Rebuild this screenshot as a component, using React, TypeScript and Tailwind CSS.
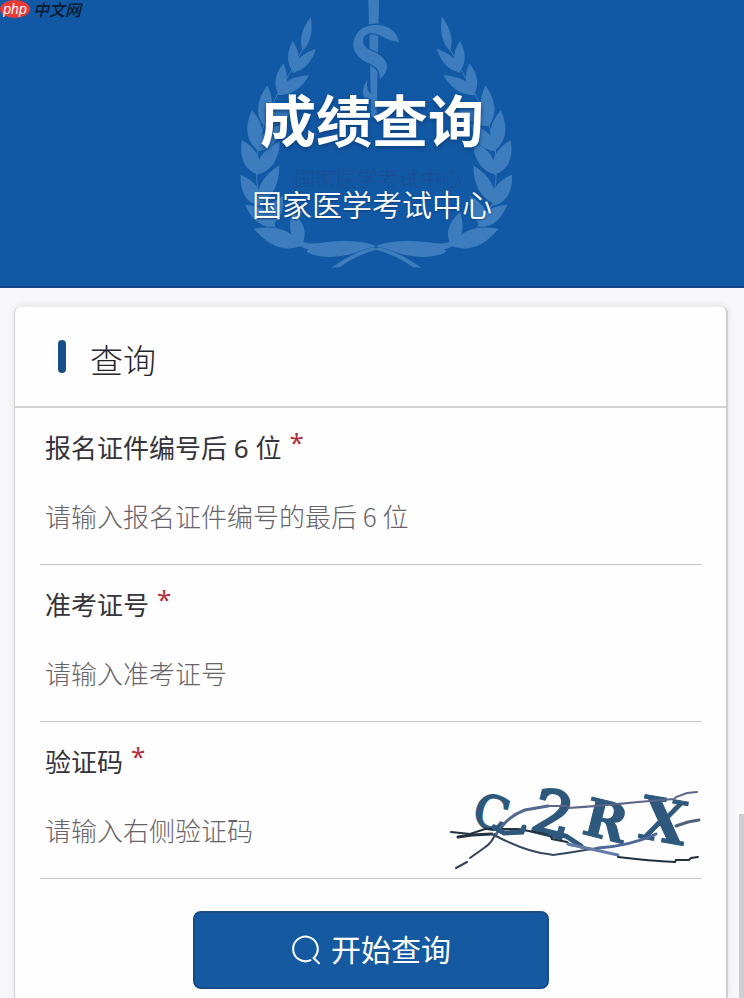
import React from "react";

type Point = [number, number];

// tip, base and half width of every leaf on the left branch
const leaves: [Point, Point, number][] = [
  [[242, 50], [218, 152], 30],
  [[188, 122], [192, 218], 36],
  [[258, 146], [186, 218], 34],
  [[160, 190], [148, 286], 38],
  [[238, 226], [140, 284], 40],
  [[112, 256], [100, 376], 46],
  [[204, 308], [100, 378], 42],
  [[66, 330], [82, 450], 50],
  [[156, 372], [82, 454], 46],
  [[36, 420], [84, 524], 52],
  [[150, 424], [82, 524], 48],
  [[32, 524], [90, 618], 50],
  [[148, 496], [84, 612], 48],
  [[46, 614], [136, 680], 46],
  [[158, 588], [110, 680], 46],
  [[72, 686], [214, 738], 58],
  [[188, 636], [214, 738], 46],
];

const leafPath = ([tip, base, w]: [Point, Point, number]) => {
  const dx = tip[0] - base[0];
  const dy = tip[1] - base[1];
  const len = Math.hypot(dx, dy);
  const nx = (-dy / len) * w * 0.9;
  const ny = (dx / len) * w * 0.9;
  const mx = base[0] + dx * 0.4;
  const my = base[1] + dy * 0.4;
  return `M${base[0]} ${base[1]} Q${mx + nx} ${my + ny} ${tip[0]} ${tip[1]} Q${mx - nx} ${my - ny} ${base[0]} ${base[1]}Z`;
};

const Branch = () => (
  <g>
    {leaves.map((leaf, i) => (
      <path key={i} d={leafPath(leaf)} />
    ))}
    <path
      d="M218 148 Q180 220 142 284 Q96 370 82 450 Q74 540 90 610 Q120 690 212 736"
      fill="none"
      stroke="currentColor"
      strokeWidth="3"
    />
    <path d="M194 716 Q230 738 290 726 Q380 716 440 738 Q404 746 376 758 Q310 780 250 764 Q220 756 236 748 Q204 742 194 716Z" />
    <path d="M430 742 Q370 756 304 803 L330 801 Q384 762 446 748Z" />
  </g>
);

const Emblem = () => (
  <svg
    className="absolute top-0 left-1/2 h-[290px] w-[290px] -translate-x-1/2 text-[#3d7dbd]"
    viewBox="-9 0 870 870"
    fill="currentColor"
    aria-hidden="true"
  >
    <Branch />
    <g transform="translate(878 0) scale(-1 1)">
      <Branch />
    </g>
    <path d="M415 0H447L440 350H424Z" />
    <path
      d="M510 134 C506 124 492 128 474 120 C454 112 440 98 420 102 C392 110 396 138 424 150 C468 168 484 196 466 222 L448 244 C450 214 440 202 412 190 C366 168 358 132 378 102 C396 72 446 64 478 82 C500 94 508 114 510 134Z"
      stroke="#1259a5"
      strokeWidth="4"
    />
    <path d="M412 240 Q392 268 402 292 L432 300 L428 284 Q406 276 412 240Z" />
  </svg>
);

const SiteLogo = () => (
  <div className="absolute top-0 left-0 flex items-center gap-[3px] pr-2 italic">
    <span className="flex h-[18px] w-[30px] items-center justify-center rounded-[50%] bg-[#ea3a36] font-['Liberation_Sans',sans-serif] text-sm leading-none text-white">
      php
    </span>
    <span className="text-base leading-[18px] font-medium text-[#06162c]">中文网</span>
  </div>
);

const Captcha = () => (
  <svg className="h-[90px] w-[252px] overflow-visible" viewBox="0 0 252 90" role="img" aria-label="验证码">
    <g
      className="font-['DejaVu_Serif','Liberation_Serif',serif]"
      fill="#2f587d"
      stroke="#2f587d"
      textAnchor="middle"
    >
      <text x="42" y="43" fontSize="46" strokeWidth="2" transform="rotate(14 42 26)">C</text>
      <text x="103" y="50" fontSize="62" strokeWidth="3" transform="rotate(14 103 28)">2</text>
      <text x="156" y="53" fontSize="52" fontWeight="700" strokeWidth="1" transform="rotate(14 156 34)">R</text>
      <text x="214" y="56" fontSize="60" fontWeight="700" strokeWidth="1" transform="rotate(10 214 34)">X</text>
    </g>
    <g fill="none" strokeWidth="2" strokeLinecap="round" transform="translate(0 -2)">
      <path stroke="#34405a" d="M6 84 L17 78 M20 74 L34 64 Q43 58 45 50" />
      <path stroke="#53698f" strokeWidth="3" d="M45 52 Q56 33 75 26 L98 22" />
      <path stroke="#5d6689" d="M98 22 H116 M118 24 Q150 22 188 18 L224 15 L226 13 L237 9 L247 8" />
      <path stroke="#22333f" d="M1 48 L20 50 L35 45 H68 L100 51 L102 55 L117 58 L120 61 L148 66" />
      <path stroke="#22333f" strokeWidth="3" d="M8 53 L22 51 L42 50" />
      <path stroke="#2f587d" strokeWidth="5" d="M44 43 L54 49 L72 48 L74 43" />
      <path stroke="#2f587d" strokeWidth="5" d="M100 49 L116 52 L131 62" />
      <path stroke="#33485c" d="M42 50 Q76 68 98 70 L103 71 L117 69 L148 64" />
      <path stroke="#637ca8" strokeWidth="3" d="M118 60 L168 71" />
      <path stroke="#4d6796" strokeWidth="3" d="M148 64 Q180 62 206 50" />
      <path stroke="#4f6279" strokeWidth="3" d="M226 42 L238 38 L249 36" />
      <path stroke="#22303a" d="M168 73 Q200 77 225 78 L226 76 L239 76 L241 74 L248 73" />
    </g>
  </svg>
);

interface FieldProps {
  id: string;
  label: string;
  placeholder: string;
  children?: React.ReactNode;
}

const Field = ({ id, label, placeholder, children }: FieldProps) => (
  <div className="relative h-[157px] border-b border-[#c6c2c9] pt-[22px]">
    <label
      htmlFor={id}
      className="flex gap-2 px-[5px] font-['Noto_Sans','Noto_Sans_CJK_SC',sans-serif] text-[26px] leading-9 text-[#35343a]"
    >
      {label}
      <span className="-mt-1.5 text-[#b0303f]">*</span>
    </label>
    <input
      id={id}
      type="text"
      placeholder={placeholder}
      className="mt-[31px] block h-9 w-full bg-transparent px-[5px] text-[26px] font-light text-[#26252b] outline-none placeholder:font-light placeholder:text-[#66646a]"
    />
    {children}
  </div>
);

const App: React.FC = () => {
  return (
    <div className="relative flex min-h-screen flex-col bg-[#f8f7f9] font-['Noto_Sans_CJK_SC',sans-serif]">
      {/* Banner */}
      <header className="relative h-72 overflow-hidden border-b-2 border-[#0d4788] bg-[#1259a5] text-center text-white">
        <Emblem />
        <div className="relative pt-[78px]">
          <h1 className="text-[56px] leading-[80px] font-bold [text-shadow:0_2px_4px_#0c3f7c]">成绩查询</h1>
          <p aria-hidden="true" className="mt-2 pl-3 text-[21px] leading-[22px] font-light text-[#1a5093]">
            国家医学考试中心
          </p>
          <p className="text-3xl leading-[30px] font-[350] [text-shadow:0_1px_2px_#0c3f7c]">国家医学考试中心</p>
        </div>
        <SiteLogo />
      </header>

      {/* Query card */}
      <main className="mt-[19px] mr-4 ml-3.5 flex-1 rounded-t-md border-r-2 border-l border-[#d0ced4] bg-[#fefefe] shadow-[0_-2px_6px_#e6e4e9]">
        <div className="flex h-[101px] items-center border-b-2 border-[#d3d2d6] pl-[43px]">
          <span className="h-[33px] w-2 rounded-full bg-[#174d89]" />
          <h2 className="ml-6 pt-1 text-[33px] leading-10 font-light text-[#26252b]">查询</h2>
        </div>

        <form className="pr-6 pl-[25px]" onSubmit={(e) => e.preventDefault()}>
          <Field id="idNumber" label="报名证件编号后 6 位" placeholder="请输入报名证件编号的最后 6 位" />
          <Field id="ticketNumber" label="准考证号" placeholder="请输入准考证号" />
          <Field id="captcha" label="验证码" placeholder="请输入右侧验证码">
            <div className="absolute right-0 bottom-0.5">
              <Captcha />
            </div>
          </Field>

          <button
            type="submit"
            className="mx-auto mt-8 flex h-[78px] w-[356px] items-center justify-center gap-2.5 rounded-lg border-2 border-[#174b8b] bg-[#155aa0] pb-1 text-3xl text-white"
          >
            <svg
              className="mt-1 h-[30px] w-[30px]"
              viewBox="0 0 30 30"
              fill="none"
              stroke="currentColor"
              strokeWidth="2"
              strokeLinecap="round"
              aria-hidden="true"
            >
              <path d="M19.5 25.2A12.3 12.3 0 1 1 23.6 22.2" />
              <path d="M22.5 23L28 28.2" />
            </svg>
            开始查询
          </button>
        </form>
      </main>

      {/* Scroll thumb */}
      <div className="absolute right-0 bottom-0 h-[184px] w-[5px] bg-[#cfced0]" />
    </div>
  );
};

export default App;
